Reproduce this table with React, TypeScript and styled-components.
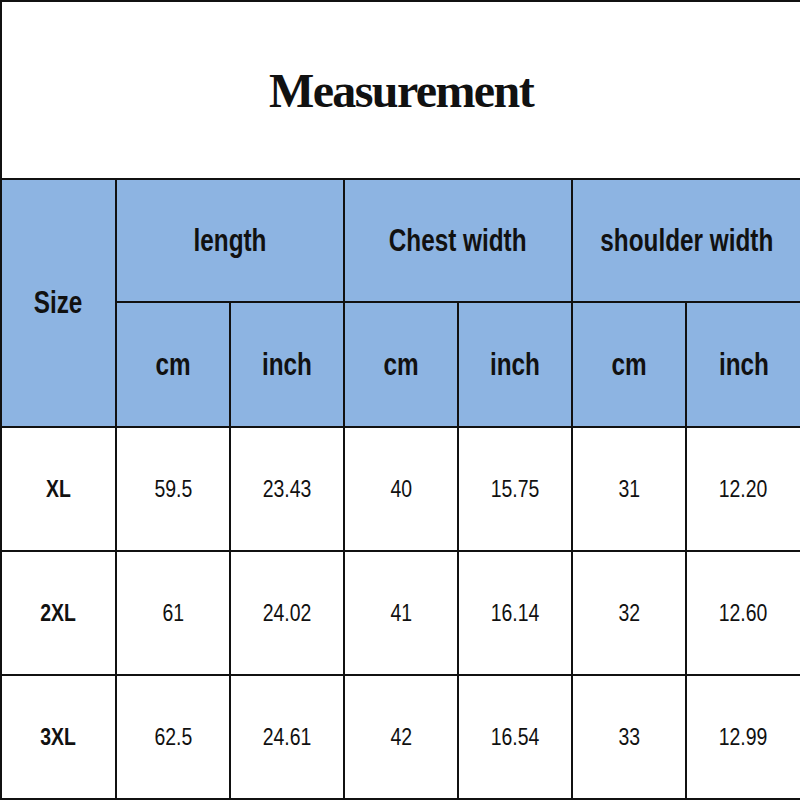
import React from "react";
import styled, { createGlobalStyle } from "styled-components";

const Global = createGlobalStyle`
  html, body { margin: 0; padding: 0; background: #ffffff; }
  body { width: 800px; height: 800px; overflow: hidden; }
`;

const Table = styled.table`
  width: 800px;
  height: 800px;
  border-collapse: collapse;
  table-layout: fixed;
  font-family: "Liberation Sans", Arial, sans-serif;
  color: #111111;
`;

const Col = styled.col<{ $w: number }>`
  width: ${(p) => p.$w}px;
`;

const TitleCell = styled.td`
  height: 176px;
  border: 2px solid #111111;
  text-align: center;
  vertical-align: middle;
  font-family: "Liberation Serif", "Times New Roman", serif;
  font-weight: 700;
  font-size: 48px;
  letter-spacing: -1.6px;
  padding: 0;
`;

const HeadCell = styled.th<{ $h?: number }>`
  height: ${(p) => p.$h ?? 122}px;
  background: #8db4e2;
  border: 2px solid #111111;
  text-align: center;
  vertical-align: middle;
  font-weight: 700;
  font-size: 32px;
  padding: 0;
  white-space: nowrap;
`;

const DataCell = styled.td<{ $bold?: boolean }>`
  height: 122px;
  background: #ffffff;
  border: 2px solid #111111;
  text-align: center;
  vertical-align: middle;
  font-size: 24px;
  font-weight: ${(p) => (p.$bold ? 700 : 400)};
  padding: 0;
  white-space: nowrap;
`;

/* Calibri-like narrow face: Liberation Sans compressed horizontally */
const Narrow = styled.span<{ $sx?: number }>`
  display: inline-block;
  transform: scaleX(${(p) => p.$sx ?? 0.76});
  transform-origin: center;
`;

const rows = [
  ["XL", "59.5", "23.43", "40", "15.75", "31", "12.20"],
  ["2XL", "61", "24.02", "41", "16.14", "32", "12.60"],
  ["3XL", "62.5", "24.61", "42", "16.54", "33", "12.99"],
];

const widths = [115, 114, 114, 114, 114, 114, 115];
const groups = ["length", "Chest width", "shoulder width"];

export default function App() {
  return (
    <>
      <Global />
      <Table>
        <colgroup>
          {widths.map((w, i) => (
            <Col key={i} $w={w} />
          ))}
        </colgroup>
        <tbody>
          <tr>
            <TitleCell colSpan={7}>Measurement</TitleCell>
          </tr>
          <tr>
            <HeadCell rowSpan={2}>
              <Narrow>Size</Narrow>
            </HeadCell>
            {groups.map((g) => (
              <HeadCell key={g} colSpan={2} $h={121}>
                <Narrow>{g}</Narrow>
              </HeadCell>
            ))}
          </tr>
          <tr>
            {groups.flatMap((g) => [
              <HeadCell key={g + "cm"}>
                <Narrow>cm</Narrow>
              </HeadCell>,
              <HeadCell key={g + "in"}>
                <Narrow>inch</Narrow>
              </HeadCell>,
            ])}
          </tr>
          {rows.map((r) => (
            <tr key={r[0]}>
              {r.map((v, i) => (
                <DataCell key={i} $bold={i === 0}>
                  <Narrow $sx={0.81}>{v}</Narrow>
                </DataCell>
              ))}
            </tr>
          ))}
        </tbody>
      </Table>
    </>
  );
}
